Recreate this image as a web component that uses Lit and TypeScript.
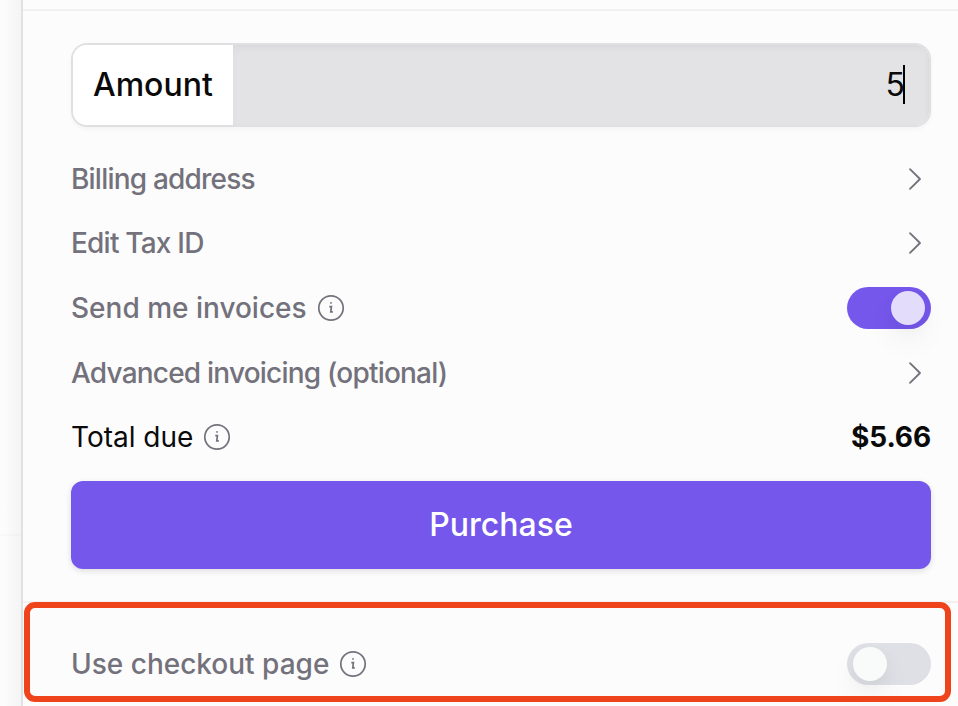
import { LitElement, html, css } from "lit";
import { customElement, property } from "lit/decorators.js";

@customElement("info-icon")
class InfoIcon extends LitElement {
  static styles = css`
    :host { display: block; width: 28px; height: 28px; color: #73717b; }
    svg { display: block; }
  `;
  render() {
    return html`<svg width="28" height="28" viewBox="0 0 28 28" fill="none" stroke="currentColor">
      <circle cx="14" cy="14" r="12.2" stroke-width="1.7" />
      <path d="M12.3 12.7H14.4L13.8 17.8H15.8" stroke-width="1.7" />
      <circle cx="14" cy="8.9" r="0.9" fill="currentColor" stroke="none" />
    </svg>`;
  }
}

@customElement("chevron-icon")
class ChevronIcon extends LitElement {
  static styles = css`
    :host { display: block; width: 32px; height: 32px; color: #73717b; }
    svg { display: block; }
  `;
  render() {
    return html`<svg width="32" height="32" viewBox="0 0 32 32" fill="none" stroke="currentColor"
      stroke-width="1.8" stroke-linecap="round" stroke-linejoin="round">
      <path d="M11 6.2L21 16L11 25.9" />
    </svg>`;
  }
}

@customElement("toggle-switch")
class ToggleSwitch extends LitElement {
  @property({ type: Boolean, reflect: true }) on = false;
  static styles = css`
    :host {
      display: flex; box-sizing: border-box; width: 84px; height: 42px; padding: 4px 6px;
      border-radius: 21px; background: #dfe0e6; justify-content: flex-start;
    }
    :host([on]) { background: #7557ec; justify-content: flex-end; }
    .knob {
      width: 34px; height: 34px; border-radius: 50%; background: #f9fbfa;
      box-shadow: 0 16px 32px rgba(0, 0, 0, 0.05), 0 6px 16px rgba(0, 0, 0, 0.04);
    }
    :host([on]) .knob { background: #e3dcfb; }
  `;
  render() {
    return html`<div class="knob"></div>`;
  }
}

@customElement("app-root")
class AppRoot extends LitElement {
  static styles = css`
    :host {
      display: grid; grid-template-columns: 21px 1fr; height: 706px; overflow: hidden;
      position: relative; background: #fcfcfc; color: #0a0a0b;
      font-family: Inter, "Liberation Sans", sans-serif; font-size: 28px; line-height: 40px;
    }
    .backdrop {
      display: flex; flex-direction: column; justify-content: flex-start;
      background: linear-gradient(to right, #fcfcfc 20%, #f4f4f4);
    }
    .backdrop::after { content: ""; height: 2px; margin-top: 534px; background: rgba(0, 0, 0, 0.015); }
    .panel { border-left: 2px solid #e2e2e4; background: #fcfcfc; display: flex; flex-direction: column; }
    .head { height: 9px; border-bottom: 2px solid #f1f1f2; }
    .form { display: flex; flex-direction: column; height: 558px; padding: 32px 27px 0 48px; border-bottom: 2px solid #f1f1f2; }
    .field {
      display: flex; box-sizing: border-box; height: 84px; border: 2px solid #e0e0e2; border-radius: 16px;
      overflow: hidden; font-size: 32px; box-shadow: 0 2px 4px rgba(0, 0, 0, 0.04); color: #0a0a0b;
    }
    .field .name { display: flex; align-items: center; width: 160px; padding-left: 20px; box-sizing: border-box; background: #fff; font-weight: 500; }
    .field .value {
      flex: 1; display: flex; align-items: center; justify-content: flex-end; padding-right: 24px;
      background: #e3e3e5; box-shadow: inset 0 4px 8px -2px rgba(0, 0, 0, 0.05), inset -3px 0 6px -2px rgba(0, 0, 0, 0.03);
    }
    .caret { width: 2px; height: 39px; background: #000; margin: 0 0 1px -2px; }
    .rows { display: flex; flex-direction: column; padding-top: 20px; }
    .row { display: flex; align-items: center; justify-content: space-between; height: 64.75px; color: #73717b; }
    .row:first-child { height: 64px; }
    .row.total { color: #0a0a0b; height: 63.75px; }
    .label { display: flex; align-items: center; gap: 10px; }
    .medium { font-weight: 500; }
    .tight { letter-spacing: -0.79px; }
    .price { font-weight: 700; letter-spacing: -0.1px; }
    .purchase {
      display: flex; align-items: center; justify-content: center; height: 88px; margin-top: 12px;
      border-radius: 12px; background: #7557ec; color: #fff; font-size: 32px; font-weight: 500;
      box-shadow: 0 2px 6px rgba(0, 0, 0, 0.12);
    }
    .footer { display: flex; align-items: center; justify-content: space-between; height: 84px; padding: 19px 27px 0 48px; color: #73717b; }
    .highlight {
      position: absolute; left: 24px; top: 602px; width: 927px; height: 100px; box-sizing: border-box;
      border: 6px solid #ef431c; border-radius: 11px;
    }
  `;

  private link(text: string) {
    return html`<div class="row"><span class="tight medium">${text}</span><chevron-icon></chevron-icon></div>`;
  }

  render() {
    return html`
      <div class="backdrop"></div>
      <div class="panel">
        <div class="head"></div>
        <div class="form">
          <div class="field">
            <div class="name">Amount</div>
            <div class="value"><span>5</span><span class="caret"></span></div>
          </div>
          <div class="rows">
            ${this.link("Billing address")}
            ${this.link("Edit Tax ID")}
            <div class="row">
              <span class="label medium"><span>Send me invoices</span><info-icon></info-icon></span>
              <toggle-switch on></toggle-switch>
            </div>
            ${this.link("Advanced invoicing (optional)")}
            <div class="row total">
              <span class="label"><span>Total due</span><info-icon></info-icon></span>
              <span class="price">$5.66</span>
            </div>
          </div>
          <div class="purchase">Purchase</div>
        </div>
        <div class="footer">
          <span class="label medium"><span>Use checkout page</span><info-icon></info-icon></span>
          <toggle-switch></toggle-switch>
        </div>
      </div>
      <div class="highlight"></div>
    `;
  }
}
